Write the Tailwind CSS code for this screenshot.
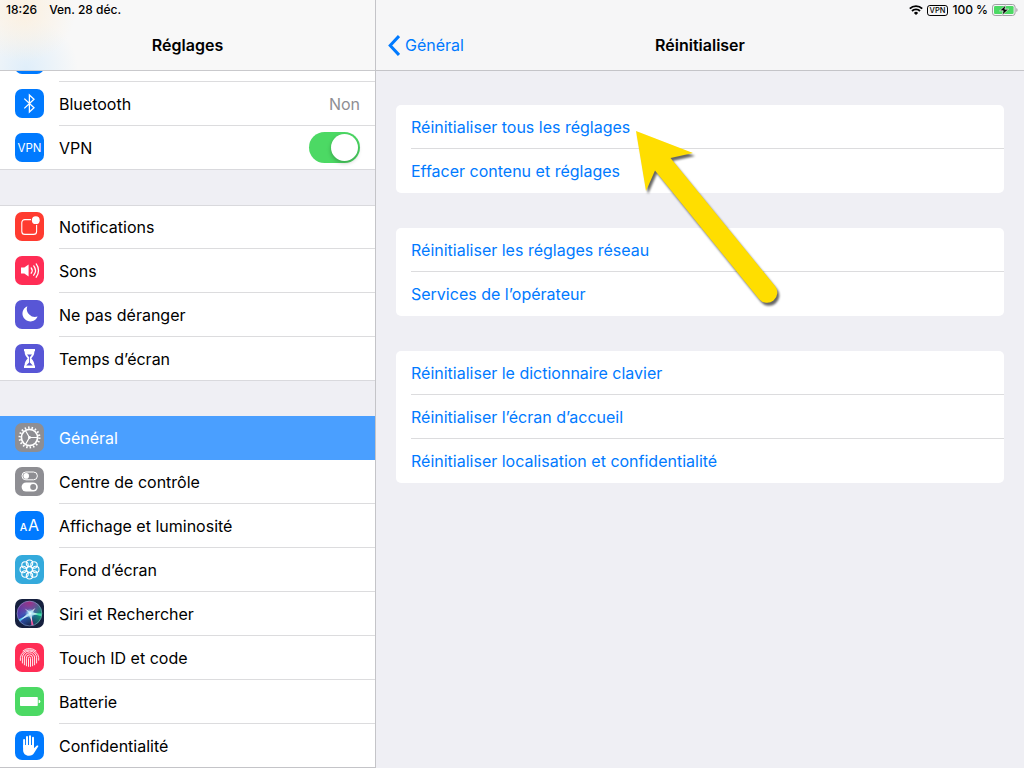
<!DOCTYPE html>
<html lang="fr">
<head>
  <meta charset="UTF-8" />
  <meta name="viewport" content="width=device-width, initial-scale=1" />
  <title>Réglages - Réinitialiser</title>
  <script src="https://cdn.jsdelivr.net/npm/@tailwindcss/browser@4"></script>
</head>
<body class="flex h-screen overflow-hidden bg-[#efeff4] font-['Inter','Noto_Sans',sans-serif] text-base text-black">

  <!-- Sidebar -->
  <aside class="flex w-94 shrink-0 flex-col border-r border-[#c4c4c8]">
    <header class="shrink-0 border-b border-[#c9c9cc] bg-[#f8f8f8] bg-[radial-gradient(circle_at_24px_10px,#fbf0e0_0px,transparent_52px),radial-gradient(circle_at_26px_70px,#dfeefa_0px,transparent_52px)]">
      <div class="flex h-5 items-center gap-3 px-1.5 text-xs font-medium">
        <span>18:26</span>
        <span>Ven. 28 déc.</span>
      </div>
      <h1 class="flex h-[50px] items-center justify-center font-semibold">Réglages</h1>
    </header>

    <nav class="min-h-0 flex-1 overflow-hidden">
      <!-- Connections -->
      <ul class="-mt-[33px] border-b border-[#d9d9dd] bg-white">
        <li class="flex h-11 pl-[15px]">
          <svg class="mt-[7px] size-[29px] shrink-0 rounded-[7px] bg-[#007aff]" viewBox="0 0 29 29"></svg>
          <a href="#" class="ml-[15px] flex flex-1 items-center border-b border-[#dcdcde]" aria-label="Wi-Fi"></a>
        </li>
        <li class="flex h-11 pl-[15px]">
          <svg class="mt-[7px] size-[29px] shrink-0 rounded-[7px] bg-[#007aff]" viewBox="0 0 29 29" fill="none" stroke="white" stroke-width="1.3" stroke-linejoin="miter">
            <path d="M9.3 9.6 L19 18.8 L14.4 23 V6 L19 10.2 L9.3 19.4" />
          </svg>
          <a href="#" class="ml-[15px] flex flex-1 items-center justify-between border-b border-[#dcdcde] pr-[15px]"><span>Bluetooth</span><span class="text-[#8e8e93]">Non</span></a>
        </li>
        <li class="flex h-[43px] pl-[15px]">
          <svg class="mt-[7px] size-[29px] shrink-0 rounded-[7px] bg-[#007aff]" viewBox="0 0 29 29">
            <text x="14.5" y="18.6" text-anchor="middle" font-size="11.5" fill="white">VPN</text>
          </svg>
          <label for="vpn" class="ml-[15px] flex flex-1 items-center">VPN</label>
          <input id="vpn" type="checkbox" role="switch" checked class="mt-1.5 mr-[15px] h-[31px] w-[51px] shrink-0 appearance-none rounded-full bg-[#e5e5ea] p-0.5 before:block before:size-[27px] before:rounded-full before:bg-white before:shadow-[0_2px_4px_rgba(0,0,0,0.25)] checked:bg-[#4cd964] checked:before:ml-5">
        </li>
      </ul>

      <!-- Alerts -->
      <ul class="mt-[35px] border-y border-[#d9d9dd] bg-white">
        <li class="flex h-[43px] pl-[15px]">
          <svg class="mt-1.5 size-[29px] shrink-0 rounded-[7px] bg-[#ff3b30]" viewBox="0 0 29 29">
            <rect x="6.8" y="7.6" width="14.8" height="14.8" rx="3" fill="none" stroke="white" stroke-width="1.1" />
            <circle cx="20.8" cy="8.2" r="4.9" fill="#ff3b30" />
            <circle cx="20.8" cy="8.2" r="3.9" fill="white" />
          </svg>
          <a href="#" class="ml-[15px] flex flex-1 items-center border-b border-[#dcdcde]">Notifications</a>
        </li>
        <li class="flex h-11 pl-[15px]">
          <svg class="mt-[7px] size-[29px] shrink-0 rounded-[7px] bg-[#ff2d55]" viewBox="0 0 29 29" fill="none" stroke="white" stroke-width="1.3" stroke-linecap="round">
            <path d="M6 11.4 h3.3 L13.6 8.6 v12 L9.3 17.6 H6 z" fill="white" stroke="none" />
            <path d="M16.2 11.9 a4.4 4.4 0 0 1 0 5.3 M18.7 9.9 a7.6 7.6 0 0 1 0 9.3 M21.2 7.9 a10.8 10.8 0 0 1 0 13.3" />
          </svg>
          <a href="#" class="ml-[15px] flex flex-1 items-center border-b border-[#dcdcde]">Sons</a>
        </li>
        <li class="flex h-11 pl-[15px]">
          <svg class="mt-[7px] size-[29px] shrink-0 rounded-[7px] bg-[#5856d6]" viewBox="0 0 29 29">
            <path d="M12.3 6.2 A7.9 7.9 0 1 0 22.6 16.6 A8.2 8.2 0 0 1 12.3 6.2 Z" fill="white" />
          </svg>
          <a href="#" class="ml-[15px] flex flex-1 items-center border-b border-[#dcdcde]">Ne pas déranger</a>
        </li>
        <li class="flex h-[43px] pl-[15px]">
          <svg class="mt-[7px] size-[29px] shrink-0 rounded-[7px] bg-[#5856d6]" viewBox="0 0 29 29">
            <path d="M9 5 H20 V7.3 H19.4 C19.4 10.6 18.3 12.2 16.3 14.4 C18.3 16.6 19.4 18.4 19.4 21.6 H20 V24 H9 V21.6 H9.6 C9.6 18.4 10.7 16.6 12.7 14.4 C10.7 12.2 9.6 10.6 9.6 7.3 H9 Z" fill="white" />
            <path d="M12 10.6 H17 L14.9 13.2 V18.6 L17.8 21.6 H11.2 L14.1 18.6 V13.2 Z" fill="#5856d6" />
          </svg>
          <a href="#" class="ml-[15px] flex flex-1 items-center">Temps d’écran</a>
        </li>
      </ul>

      <!-- General -->
      <ul class="mt-[35px] border-b border-[#c4c4c8] bg-white">
        <li class="flex h-11 bg-[#4a9fff] pl-[15px] text-white">
          <svg class="mt-[7px] size-[29px] shrink-0 rounded-[7px] bg-[#8e8e93]" viewBox="0 0 29 29" fill="none" stroke="white">
            <circle cx="14.5" cy="14.5" r="9.9" stroke-width="2.2" stroke-dasharray="1.5 1.956" />
            <circle cx="14.5" cy="14.5" r="8.1" stroke-width="1.7" />
            <circle cx="14.5" cy="14.5" r="1.4" fill="white" stroke="none" />
            <path d="M14.5 14.5 H22 M14.5 14.5 L10.6 7.7 M14.5 14.5 L10.6 21.3" stroke-width="1.2" />
          </svg>
          <a href="#" aria-current="page" class="ml-[15px] flex flex-1 items-center">Général</a>
        </li>
        <li class="flex h-11 pl-[15px]">
          <svg class="mt-[7px] size-[29px] shrink-0 rounded-[7px] bg-[#8e8e93]" viewBox="0 0 29 29">
            <rect x="7" y="5" width="15.4" height="7.8" rx="3.9" fill="none" stroke="white" stroke-width="1" />
            <circle cx="11.2" cy="8.9" r="2.8" fill="white" />
            <rect x="6.6" y="15.5" width="16.2" height="9" rx="4.5" fill="white" />
            <circle cx="18.2" cy="20" r="3" fill="#8e8e93" />
          </svg>
          <a href="#" class="ml-[15px] flex flex-1 items-center border-b border-[#dcdcde]">Centre de contrôle</a>
        </li>
        <li class="flex h-11 pl-[15px]">
          <svg class="mt-[7px] size-[29px] shrink-0 rounded-[7px] bg-[#007aff]" viewBox="0 0 29 29" fill="white">
            <text x="4.8" y="19.5" font-size="10.5" font-weight="500">A</text>
            <text x="13" y="19.5" font-size="16">A</text>
          </svg>
          <a href="#" class="ml-[15px] flex flex-1 items-center border-b border-[#dcdcde]">Affichage et luminosité</a>
        </li>
        <li class="flex h-11 pl-[15px]">
          <svg class="mt-[7px] size-[29px] shrink-0 rounded-[7px] bg-[#34aadc]" viewBox="0 0 29 29" fill="none" stroke="white" stroke-width="1.1">
            <circle cx="14.5" cy="14.5" r="2.9" />
            <circle cx="14.5" cy="8.2" r="3.2" />
            <circle cx="19" cy="10" r="3.2" />
            <circle cx="20.8" cy="14.5" r="3.2" />
            <circle cx="19" cy="19" r="3.2" />
            <circle cx="14.5" cy="20.8" r="3.2" />
            <circle cx="10" cy="19" r="3.2" />
            <circle cx="8.2" cy="14.5" r="3.2" />
            <circle cx="10" cy="10" r="3.2" />
          </svg>
          <a href="#" class="ml-[15px] flex flex-1 items-center border-b border-[#dcdcde]">Fond d’écran</a>
        </li>
        <li class="flex h-11 pl-[15px]">
          <svg class="mt-[7px] size-[29px] shrink-0 rounded-[7px] bg-[#16203f]" viewBox="0 0 29 29">
            <defs>
              <linearGradient id="siriBase" x1="0" y1="0.3" x2="1" y2="0.6">
                <stop offset="0" stop-color="#5b2a9c" />
                <stop offset="0.45" stop-color="#2c6fd0" />
                <stop offset="1" stop-color="#0f8f63" />
              </linearGradient>
              <radialGradient id="siriPink" cx="0.5" cy="0.05" r="0.6">
                <stop offset="0" stop-color="#a02f80" />
                <stop offset="1" stop-color="#a02f80" stop-opacity="0" />
              </radialGradient>
              <radialGradient id="siriDark" cx="0.5" cy="1.05" r="0.6">
                <stop offset="0" stop-color="#1b1b4a" />
                <stop offset="1" stop-color="#1b1b4a" stop-opacity="0" />
              </radialGradient>
              <radialGradient id="siriGlow">
                <stop offset="0" stop-color="#ffffff" />
                <stop offset="0.35" stop-color="#b9f1ff" stop-opacity="0.8" />
                <stop offset="1" stop-color="#67d8f5" stop-opacity="0" />
              </radialGradient>
            </defs>
            <circle cx="14.5" cy="14.5" r="12.6" fill="url(#siriBase)" />
            <circle cx="14.5" cy="14.5" r="12.6" fill="url(#siriPink)" />
            <circle cx="14.5" cy="14.5" r="12.6" fill="url(#siriDark)" />
            <path d="M15.5 14 L18.6 26.3 L16.4 26.6 Z" fill="#f0579e" />
            <path d="M15 14.5 L5 22.6 L3.6 20.4 Z" fill="#4fc4f2" />
            <path d="M14.5 14 L26.8 14.6 L26.4 17.2 Z" fill="#3fe0a8" />
            <path d="M15 15 L9.6 9.6 L14.8 12.6 L20.4 9 L17.8 13.2 L23 15 L17 16.4 L17 23 L14.2 17 L6 20.4 L12 15 Z" fill="white" opacity="0.7" />
            <circle cx="15" cy="14.4" r="5" fill="url(#siriGlow)" />
            <circle cx="14.5" cy="14.5" r="12.4" fill="none" stroke="#9bb4d6" stroke-opacity="0.7" stroke-width="0.7" />
          </svg>
          <a href="#" class="ml-[15px] flex flex-1 items-center border-b border-[#dcdcde]">Siri et Rechercher</a>
        </li>
        <li class="flex h-11 pl-[15px]">
          <svg class="mt-[7px] size-[29px] shrink-0 rounded-[7px] bg-[#ff2d55]" viewBox="0 0 29 29" fill="none" stroke="white" stroke-width="0.9" stroke-linecap="round">
            <path d="M8 7.9 A9.6 9.6 0 0 1 21 7.9" />
            <path d="M5.4 17.4 V14.6 A9.2 8.6 0 0 1 23.7 14.6 V17.2" />
            <path d="M7.4 20 V14.8 A7.1 6.8 0 0 1 21.6 14.8 V20" />
            <path d="M9.4 21.8 V15 A5.1 5.2 0 0 1 19.6 15 V21.8" />
            <path d="M11.4 22.8 V15.2 A3.1 3.4 0 0 1 17.6 15.2 V22.8" />
            <path d="M13.5 23.4 V15.4 A1 1.4 0 0 1 15.5 15.4 V23.4" />
          </svg>
          <a href="#" class="ml-[15px] flex flex-1 items-center border-b border-[#dcdcde]">Touch ID et code</a>
        </li>
        <li class="flex h-11 pl-[15px]">
          <svg class="mt-[7px] size-[29px] shrink-0 rounded-[7px] bg-[#4cd964]" viewBox="0 0 29 29" fill="white">
            <rect x="5" y="10" width="17.8" height="9" rx="0.8" />
            <path d="M23.6 12.7 a1.8 1.8 0 0 1 0 3.6 z" />
          </svg>
          <a href="#" class="ml-[15px] flex flex-1 items-center border-b border-[#dcdcde]">Batterie</a>
        </li>
        <li class="flex h-[43px] pl-[15px]">
          <svg class="mt-[7px] size-[29px] shrink-0 rounded-[7px] bg-[#007aff]" viewBox="0 0 29 29" fill="none" stroke="white" stroke-width="2" stroke-linecap="round">
            <path d="M9.1 9 V16 M12 6 V15 M15 5.2 V15 M18 6.8 V16" />
            <path d="M8.1 14 H19 V17.3 L21.6 14.8 C22.4 14 23.8 14.4 23.2 15.5 L19.4 21.6 C18.2 23.8 16.4 24.8 14 24.8 C10.4 24.8 8.1 22.4 8.1 19 Z" fill="white" stroke="none" />
          </svg>
          <a href="#" class="ml-[15px] flex flex-1 items-center">Confidentialité</a>
        </li>
      </ul>
    </nav>
  </aside>

  <!-- Detail pane -->
  <main class="relative min-w-0 flex-1">
    <header class="border-b border-[#c4c4c8] bg-[#f6f6f7]">
      <div class="flex h-5 items-center justify-end gap-1 pr-1.5 text-xs font-medium">
        <svg class="h-2.5 w-3.5" viewBox="0 0 14 10" fill="none" stroke="black" stroke-width="1.9">
          <path d="M0.8 3.7 A8.8 8.8 0 0 1 13.2 3.7 M3 6 A5.7 5.7 0 0 1 11 6" />
          <path d="M7 10 L4.9 7.9 A3 3 0 0 1 9.1 7.9 Z" fill="black" stroke="none" />
        </svg>
        <svg class="h-[11px] w-[21px]" viewBox="0 0 21 11">
          <rect x="0.5" y="0.5" width="20" height="10" rx="2.4" fill="none" stroke="black" />
          <text x="10.5" y="8.3" text-anchor="middle" font-size="7.5" font-weight="500">VPN</text>
        </svg>
        <span>100 %</span>
        <svg class="h-3 w-[26px]" viewBox="0 0 26 12">
          <rect x="0.5" y="0.5" width="22.6" height="11" rx="2.6" fill="none" stroke="#a0a0a3" />
          <rect x="2" y="2" width="19.6" height="8" rx="1.2" fill="#4cd964" />
          <path d="M24.3 4 a2.2 2.2 0 0 1 0 4 z" fill="#a0a0a3" />
          <path d="M14 0.8 L7.6 6.8 H11.2 L10 11.4 L16.6 5.2 H12.8 Z" fill="black" stroke="#f6f6f7" stroke-width="0.7" />
        </svg>
      </div>
      <div class="grid h-[50px] grid-cols-3 items-center px-3">
        <a href="#" class="flex items-center gap-[5px] text-[#007aff]">
          <svg class="h-[21px] w-3" viewBox="0 0 12 21" fill="none" stroke="currentColor" stroke-width="3"><path d="M11 1 L2.2 10.5 L11 20" /></svg>
          Général
        </a>
        <h2 class="text-center font-semibold">Réinitialiser</h2>
      </div>
    </header>

    <div class="flex flex-col gap-[35px] px-5 pt-[34px] text-[#007aff]">
      <section class="rounded-[5px] bg-white pl-[15px]">
        <button type="button" class="block h-11 w-full border-b border-[#dcdcde] text-left">Réinitialiser tous les réglages</button>
        <button type="button" class="block h-11 w-full text-left">Effacer contenu et réglages</button>
      </section>
      <section class="rounded-[5px] bg-white pl-[15px]">
        <button type="button" class="block h-11 w-full border-b border-[#dcdcde] text-left">Réinitialiser les réglages réseau</button>
        <button type="button" class="block h-11 w-full text-left">Services de l’opérateur</button>
      </section>
      <section class="rounded-[5px] bg-white pl-[15px]">
        <button type="button" class="block h-11 w-full border-b border-[#dcdcde] text-left">Réinitialiser le dictionnaire clavier</button>
        <button type="button" class="block h-11 w-full border-b border-[#dcdcde] text-left">Réinitialiser l’écran d’accueil</button>
        <button type="button" class="block h-11 w-full text-left">Réinitialiser localisation et confidentialité</button>
      </section>
    </div>

    <!-- Arrow pointing at the first option -->
    <svg class="pointer-events-none absolute top-[120px] left-[244px] h-[200px] w-[180px] drop-shadow-[2px_3px_1px_rgba(0,0,0,0.6)]" viewBox="0 0 180 200" fill="#ffde00">
      <path d="M16 11 L73 33 L50.5 38 L155 166 A10 10 0 0 1 139 179 L35 50.5 L26 71 Z" />
    </svg>
  </main>
</body>
</html>
